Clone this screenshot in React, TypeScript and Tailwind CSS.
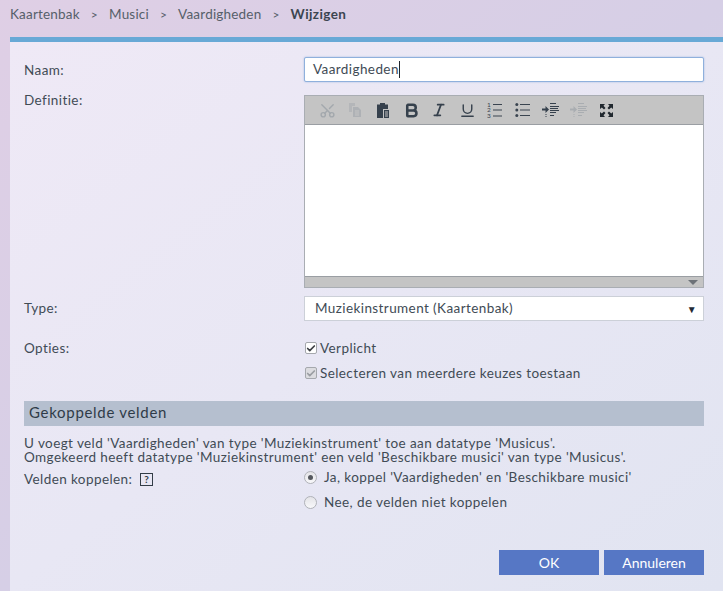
import { Bold, Check, Italic, Scissors, Underline } from 'lucide-react';

const font = "[font-family:Lato,'Open_Sans',sans-serif]";

function CopyIcon() {
  return (
    <svg width="15" height="16" viewBox="0 0 15 16" className="text-[#aeb1b5]">
      <path d="M1 1h6v3H4v6H1z" fill="currentColor" opacity="0.7" />
      <path d="M5 5h5l3 3v7H5z" fill="currentColor" />
      <path d="M7 9h4M7 11h4M7 13h4" stroke="#c4c4c4" />
    </svg>
  );
}

function ClipboardIcon() {
  return (
    <svg width="14" height="17" viewBox="0 0 14 17" className="text-[#36414d]">
      <path d="M1 2.500h3V1h5v1.500h3V7H7v9H1z" fill="currentColor" />
      <path d="M8 8h5v8H8z" fill="currentColor" />
      <path d="M9 10h3M9 12h3M9 14h3" stroke="#c4c4c4" />
    </svg>
  );
}

function OrderedIcon() {
  return (
    <svg width="16" height="18" viewBox="0 0 16 18" className="text-[#3a4450]">
      <text x="0" y="5.500" fontSize="6.500" fontFamily="Lato" fill="currentColor">1</text>
      <text x="0" y="11" fontSize="6.500" fontFamily="Lato" fill="currentColor">2</text>
      <text x="0" y="17" fontSize="6.500" fontFamily="Lato" fill="currentColor">3</text>
      <path d="M6 3.500h9M6 9h9M6 15h9" stroke="currentColor" strokeWidth="1" />
    </svg>
  );
}

function BulletIcon() {
  return (
    <svg width="15" height="16" viewBox="0 0 15 16" className="text-[#3a4450]">
      <circle cx="1.800" cy="2.500" r="1.500" fill="currentColor" />
      <circle cx="1.800" cy="8" r="1.500" fill="currentColor" />
      <circle cx="1.800" cy="13.500" r="1.500" fill="currentColor" />
      <path d="M5 2.500h10M5 8h10M5 13.500h10" stroke="currentColor" strokeWidth="1" />
    </svg>
  );
}

function IndentIcon({ dim }: { dim?: boolean }) {
  return (
    <svg width="18" height="16" viewBox="0 0 18 16" className={dim ? 'text-[#a9adb1]' : 'text-[#36414d]'}>
      <path d="M8 1.500h6M8 4.500h9M8 6.500h8M8 8.500h9M8 10.500h6M8 13.500h4" stroke="currentColor" strokeWidth="1.200" />
      <path d="M0 6.500h3.500V4l3.500 3.500L3.500 11V8.500H0z" fill="currentColor" />
      <path d="M4 12v3" stroke="currentColor" strokeDasharray="1 1" />
    </svg>
  );
}

function FullscreenIcon() {
  return (
    <svg width="15" height="15" viewBox="0 0 15 15" className="text-[#20272e]">
      <path d="M1 1h5L4.500 2.800 6.500 5 5 6.500 2.800 4.500 1 6zM14 1v5l-1.800-1.500L10 6.500 8.500 5l2-2.200L9 1zM1 14V9l1.800 1.500L5 8.500 6.500 10l-2 2.200L6 14zM14 14H9l1.500-1.800L8.500 10 10 8.500l2.200 2L14 9z" fill="currentColor" />
    </svg>
  );
}

function Toolbar() {
  return (
    <div className="flex h-[29px] items-center border-b border-[#9a9ea3] bg-[#c4c4c4] pl-[14px]">
      <span className="flex w-[29px] text-[#a3a8ad]"><Scissors size={17} className="rotate-[-90deg]" /></span>
      <span className="flex w-[28px]"><CopyIcon /></span>
      <span className="flex w-[27px]"><ClipboardIcon /></span>
      <span className="flex w-[28px] text-[#36414d]"><Bold size={17} strokeWidth={3.6} /></span>
      <span className="flex w-[28px] text-[#36414d]"><Italic size={16} strokeWidth={2.6} /></span>
      <span className="flex w-[28px] text-[#36414d]"><Underline size={17} strokeWidth={2} /></span>
      <span className="flex w-[28px]"><OrderedIcon /></span>
      <span className="flex w-[27px]"><BulletIcon /></span>
      <span className="flex w-[28px]"><IndentIcon /></span>
      <span className="flex w-[29px]"><IndentIcon dim /></span>
      <FullscreenIcon />
    </div>
  );
}

function CheckBox({ dim }: { dim?: boolean }) {
  return (
    <span className={`flex h-[12px] w-[12px] items-center justify-center rounded-[2px] border border-[#a5a8ad] ${dim ? 'bg-[#dcdce0] text-[#9a9da2]' : 'bg-white text-[#3c3f44]'}`}>
      <Check size={11} strokeWidth={4} />
    </span>
  );
}

function Radio({ on }: { on?: boolean }) {
  return (
    <span className="flex h-[13px] w-[13px] items-center justify-center rounded-full border border-[#b0b2b8] bg-gradient-to-b from-[#e4e4e8] to-[#f8f8fa]">
      {on && <span className="h-[5px] w-[5px] rounded-full bg-[#55585e]" />}
    </span>
  );
}

export default function App() {
  return (
    <div className={`${font} h-[591px] w-[723px] overflow-hidden bg-gradient-to-br from-[#dfcfe5] via-[#d6cfe6] to-[#d5d6ea] pl-[10px] text-[13.5px] tracking-[0.41px] text-[#414b55]`}>
      <div className="flex h-[37px] items-start pt-[4px] tracking-[0.2px] text-[#56606a]">
        <span>Kaartenbak</span>
        <span className="mx-[11px] text-[12px] leading-[21px]">&gt;</span>
        <span>Musici</span>
        <span className="mx-[11px] text-[12px] leading-[21px]">&gt;</span>
        <span>Vaardigheden</span>
        <span className="mx-[11px] text-[12px] leading-[21px]">&gt;</span>
        <span className="font-bold tracking-[0.41px] text-[#3b4550]">Wijzigen</span>
      </div>

      <div className="h-[554px] border-t-[5px] border-[#68a9d6] bg-gradient-to-br from-[#efe9f6] via-[#e8e7f4] to-[#e1e4f1] pl-[14px] pr-[19px]">
        <div className="grid grid-cols-[280px_400px] pt-[15px]">
          <label className="pt-[3px]">Naam:</label>
          <div className="flex h-[25px] items-center rounded-[2px] border border-[#8fb0dc] bg-white pl-2 shadow-[0_0_2px_#9db8e0]">
            <span>Vaardigheden</span>
            <span className="h-[17px] w-px bg-[#20272e]" />
          </div>

          <label className="pt-[8px]">Definitie:</label>
          <div className="mt-[13px] h-[193px] border border-[#a9adb3] bg-white">
            <Toolbar />
            <div className="h-[151px]" />
            <div className="flex h-[11px] items-center justify-end border-t border-[#9a9ea3] bg-[#c4c4c4] pr-[5px]">
              <span className="h-0 w-0 border-x-[5px] border-t-[5px] border-x-transparent border-t-[#6d7278]" />
            </div>
          </div>

          <label className="pt-[10px]">Type:</label>
          <div className="mt-[8px] flex h-[25px] items-center justify-between border border-[#ccd0d8] bg-white pl-[10px] pr-[6px]">
            <span>Muziekinstrument (Kaartenbak)</span>
            <span className="text-[10px] leading-none text-[#1f2a36]">▼</span>
          </div>

          <label className="pt-[17px]">Opties:</label>
          <div className="pt-[17px]">
            <div className="flex h-[20px] items-center gap-[3px] pl-px">
              <CheckBox />
              <span>Verplicht</span>
            </div>
            <div className="mt-[5px] flex h-[20px] items-center gap-[3px] pl-px">
              <CheckBox dim />
              <span>Selecteren van meerdere keuzes toestaan</span>
            </div>
          </div>
        </div>

        <div className="mt-[18px] flex h-[25px] w-[680px] items-center bg-[#b5bfcf] pb-[2px] pl-[5px] text-[15px] tracking-[0.7px] text-[#2f3b48]">
          Gekoppelde velden
        </div>

        <p className="mt-[10px] w-[680px] whitespace-nowrap leading-[14px]">
          U voegt veld 'Vaardigheden' van type 'Muziekinstrument' toe aan datatype 'Musicus'.
          <br />
          Omgekeerd heeft datatype 'Muziekinstrument' een veld 'Beschikbare musici' van type 'Musicus'.
        </p>

        <div className="mt-[3px] grid grid-cols-[280px_400px]">
          <div className="flex items-center gap-[8px] self-start pt-[2px] leading-[20px]">
            <span>Velden koppelen:</span>
            <span className="flex h-[13px] w-[13px] items-center justify-center border border-[#333d47] text-[10px] font-bold leading-none text-[#333d47]">?</span>
          </div>
          <div>
            <div className="flex h-[20px] items-center gap-[7px]">
              <Radio on />
              <span>Ja, koppel 'Vaardigheden' en 'Beschikbare musici'</span>
            </div>
            <div className="mt-[5px] flex h-[20px] items-center gap-[7px]">
              <Radio />
              <span>Nee, de velden niet koppelen</span>
            </div>
          </div>
        </div>

        <div className="mt-[38px] flex w-[680px] justify-end gap-[5px]">
          <button className="h-[25px] w-[100px] bg-[#5677c5] text-[14px] tracking-normal text-white">OK</button>
          <button className="h-[25px] w-[100px] bg-[#5677c5] text-[14px] tracking-normal text-white">Annuleren</button>
        </div>
      </div>
    </div>
  );
}
